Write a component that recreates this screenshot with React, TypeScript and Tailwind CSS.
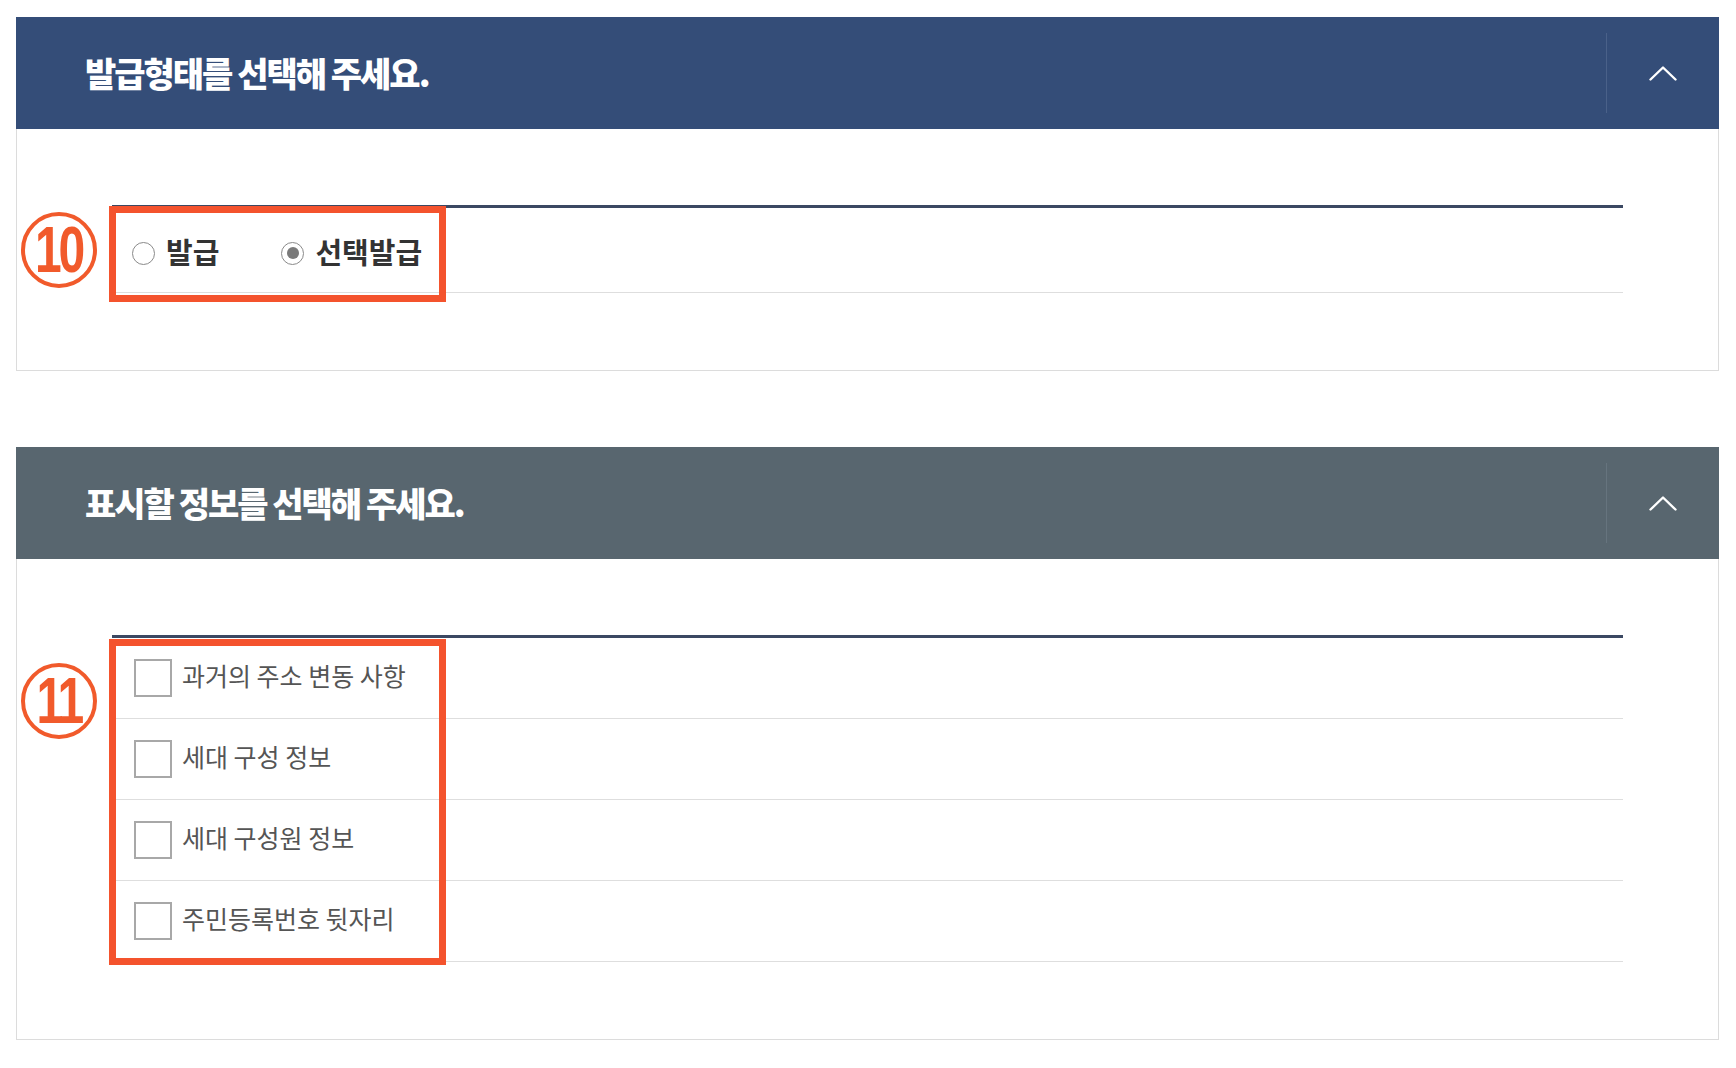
import type { ReactNode } from 'react';

const FONT = { fontFamily: '"Noto Sans CJK KR", "Noto Sans", sans-serif' };

interface PanelProps {
  title: string;
  headerClass: string;
  dividerClass: string;
  children: ReactNode;
}

const ChevronUp = () => (
  <svg width="28" height="16" viewBox="0 0 28 16" fill="none">
    <polyline points="1.5,14.5 14,2.5 26.5,14.5" stroke="white" strokeWidth="2.4" strokeLinecap="round" strokeLinejoin="round" />
  </svg>
);

const Panel = ({ title, headerClass, dividerClass, children }: PanelProps) => (
  <section className="w-[1703px] border-x border-b border-[#dcdcdc] bg-white">
    <div className={`-mx-px flex h-[112px] items-center ${headerClass}`}>
      <h2 className="flex-1 pl-[69px] pb-[2px] text-[34px] font-black tracking-[-2px] text-white">
        {title}
      </h2>
      <div className="flex h-full w-[113px] items-center py-[16px]">
        <div className={`h-full w-px ${dividerClass}`} />
        <div className="flex flex-1 items-center justify-center">
          <ChevronUp />
        </div>
      </div>
    </div>
    <div className="px-[95px] pb-[77px] pt-[76px]">{children}</div>
  </section>
);

// numbered annotation circle on the left of the table
const Marker = ({ n, className }: { n: string; className: string }) => (
  <div
    className={`absolute left-[-91px] flex h-[76px] w-[76px] items-center justify-center rounded-full border-[4px] border-[#f15a2b] ${className}`}
  >
    <span
      className="scale-x-75 text-[64px] font-bold leading-none tracking-[-4px] text-[#f15a2b]"
      style={{ fontFamily: '"Liberation Sans", Arial, sans-serif' }}
    >
      {n}
    </span>
  </div>
);

const Radio = ({ label, checked }: { label: string; checked?: boolean }) => (
  <label className="flex items-center gap-[11px]">
    <span className="flex h-[23px] w-[23px] items-center justify-center rounded-full border-[1.5px] border-[#8a8a8a] bg-white">
      {checked && <span className="h-[12px] w-[12px] rounded-full bg-[#7a7a7a]" />}
    </span>
    <span className="pb-[2px] text-[29px] font-bold text-[#333333]">{label}</span>
  </label>
);

const CheckRow = ({ label }: { label: string }) => (
  <div className="flex h-[81px] items-center gap-[10px] border-b border-[#dedede] pl-[22px]">
    <span className="h-[38px] w-[38px] border-2 border-[#a8a8a8] bg-white" />
    <span className="pb-[5px] text-[25px] text-[#555555]">{label}</span>
  </div>
);

export default function App() {
  return (
    <div className="min-h-[1068px] w-[1736px] bg-white pl-[16px] pt-[17px]" style={FONT}>
      <Panel title="발급형태를 선택해 주세요." headerClass="bg-[#344d78]" dividerClass="bg-[#4a6189]">
        <div className="relative border-t-[3px] border-[#3b4862]">
          <div className="flex h-[85px] items-center gap-[62px] border-b border-[#dedede] pl-[20px] pt-[6px]">
            <Radio label="발급" />
            <Radio label="선택발급" checked />
          </div>
          <Marker n="10" className="top-[4px]" />
          <div className="absolute left-[-3px] top-[-2px] h-[96px] w-[337px] border-[7px] border-[#f4532d]" />
        </div>
      </Panel>

      <div className="mt-[76px]">
        <Panel title="표시할 정보를 선택해 주세요." headerClass="bg-[#58666f]" dividerClass="bg-[#66747e]">
          <div className="relative border-t-[3px] border-[#3b4862]">
            <CheckRow label="과거의 주소 변동 사항" />
            <CheckRow label="세대 구성 정보" />
            <CheckRow label="세대 구성원 정보" />
            <CheckRow label="주민등록번호 뒷자리" />
            <Marker n="11" className="top-[25px]" />
            <div className="absolute left-[-3px] top-[1px] h-[326px] w-[337px] border-[7px] border-[#f4532d]" />
          </div>
        </Panel>
      </div>
    </div>
  );
}
